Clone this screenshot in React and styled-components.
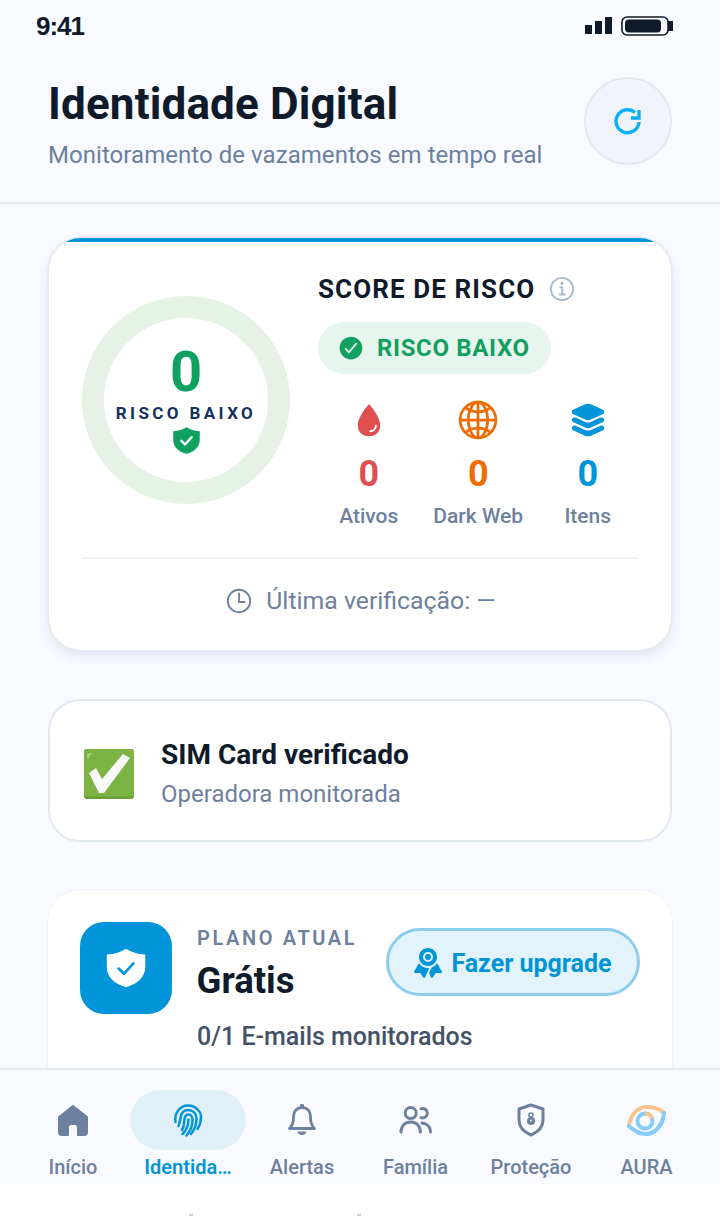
import styled, { createGlobalStyle } from "styled-components";
import {
  IoCheckmarkCircle,
  IoTimeOutline,
  IoInformationCircleOutline,
  IoWater,
  IoGlobeOutline,
  IoLayers,
  IoRibbon,
} from "react-icons/io5";

const Global = createGlobalStyle`
  html, body { margin: 0; padding: 0; background: #fff; }
  * { box-sizing: border-box; }
`;

const Phone = styled.div`
  width: 720px;
  height: 1216px;
  overflow: hidden;
  background: #fff;
  font-family: Roboto, "Liberation Sans", sans-serif;
`;
const Screen = styled.div`
  height: 1184px;
  background: #f8faff;
  display: flex;
  flex-direction: column;
  overflow: hidden;
`;
const StatusBar = styled.div`
  height: 50px;
  flex: none;
  padding: 8px 46px 0 36px;
  display: flex;
  justify-content: space-between;
  align-items: flex-start;
`;
const Time = styled.span`
  font-family: "Liberation Sans", sans-serif;
  font-size: 26px;
  line-height: 36px;
  font-weight: 700;
  letter-spacing: -1px;
  color: #0f1b2b;
`;
const StatusIcons = styled.div`
  display: flex;
  margin-top: 8px;
  gap: 9px;
`;
const Header = styled.header`
  flex: none;
  height: 154px;
  padding: 28px 48px 0 48px;
  border-bottom: 2px solid #e2e8f0;
  display: flex;
  justify-content: space-between;
  align-items: flex-start;
`;
const Title = styled.h1`
  margin: 0;
  font-size: 44px;
  line-height: 52px;
  font-weight: 700;
  letter-spacing: 0.15px;
  color: #0f1b2b;
`;
const Subtitle = styled.p`
  margin: 7px 0 0;
  font-size: 24px;
  line-height: 36px;
  letter-spacing: 0.05px;
  color: #6d809e;
`;
const RefreshButton = styled.button`
  width: 88px;
  height: 88px;
  margin-top: -1px;
  padding: 1px 0 0;
  border-radius: 50%;
  background: #f1f5f9;
  border: 2px solid #e2e8f0;
  display: flex;
  align-items: center;
  justify-content: center;
`;
const Content = styled.main`
  flex: 1;
  min-height: 0;
  padding: 34px 48px 0;
  overflow: hidden;
  display: flex;
  flex-direction: column;
  gap: 48px;
`;
const ScoreCard = styled.section`
  flex: none;
  height: 412px;
  margin: 0 1px 1px;
  background: #fff;
  border-radius: 32px;
  overflow: hidden;
  box-shadow: 0 0 0 1.5px #e2e8f0, 0 5px 12px rgba(45, 70, 110, 0.13);
`;
const ScoreStripe = styled.div`
  height: 4px;
  background: #0095d9;
`;
const ScoreBody = styled.div`
  padding: 28px 33px 0;
`;
const ScoreTop = styled.div`
  display: flex;
  height: 287px;
  gap: 28px;
`;
const Ring = styled.div`
  width: 208px;
  height: 208px;
  margin-top: 26px;
  flex: none;
  border-radius: 50%;
  border: 22px solid #e5f2e5;
  display: flex;
  flex-direction: column;
  align-items: center;
`;
const RingValue = styled.div`
  margin-top: 24px;
  font-size: 56px;
  line-height: 60px;
  font-weight: 700;
  color: #10a160;
`;
const RingLabel = styled.div`
  font-size: 17px;
  line-height: 22px;
  margin-bottom: 2px;
  font-weight: 700;
  letter-spacing: 3.4px;
  color: #14305e;
  white-space: nowrap;
`;
const ScoreInfo = styled.div`
  flex: 1;
`;
const ScoreHead = styled.div`
  display: flex;
  align-items: center;
  gap: 12px;
  height: 36px;
  margin-top: 1px;
  color: #a9bbd1;
`;
const ScoreTitle = styled.div`
  font-size: 26px;
  font-weight: 700;
  letter-spacing: 1.1px;
  color: #0f1b2b;
`;
const RiskPill = styled.div`
  display: inline-flex;
  align-items: center;
  gap: 12px;
  height: 52px;
  margin-top: 15px;
  padding: 0 21px 0 19px;
  border-radius: 26px;
  background: #e7f5ef;
  font-size: 24px;
  font-weight: 700;
  letter-spacing: 0.65px;
  color: #10a160;
`;
const Stats = styled.div`
  display: grid;
  grid-template-columns: repeat(3, 109.5px);
  margin: 26px 0 0 -4px;
`;
const Stat = styled.div`
  display: flex;
  flex-direction: column;
  align-items: center;
  color: ${(p) => p.$color};
`;
const StatIcon = styled.div`
  height: 40px;
  display: flex;
  align-items: center;
`;
const StatValue = styled.div`
  margin-top: 12px;
  font-size: 36px;
  line-height: 44px;
  font-weight: 700;
`;
const StatLabel = styled.div`
  margin-top: 6px;
  font-size: 21px;
  line-height: 28px;
  font-weight: 500;
  color: #6d809e;
  white-space: nowrap;
`;
const ScoreFoot = styled.div`
  border-top: 2px solid #edf2f7;
  height: 85px;
  display: flex;
  align-items: center;
  justify-content: center;
  gap: 12px;
  font-size: 24.8px;
  color: #6d809e;
`;
const SimCard = styled.section`
  flex: none;
  height: 143px;
  background: #fff;
  border: 2px solid #e2e8f0;
  border-radius: 32px;
  padding: 6px 33px 0;
  display: flex;
  align-items: center;
  gap: 26px;
`;
const SimTitle = styled.div`
  font-size: 28px;
  line-height: 36px;
  font-weight: 700;
  color: #0f1b2b;
`;
const SimSub = styled.div`
  margin-top: 4px;
  font-size: 24px;
  line-height: 34px;
  color: #6d809e;
`;
const PlanCard = styled.section`
  flex: none;
  height: 260px;
  background: #fff;
  border-radius: 32px;
  box-shadow: 0 0 0 1px #edf1f6;
  padding: 32px;
`;
const PlanRow = styled.div`
  display: flex;
  gap: 25px;
`;
const PlanIcon = styled.div`
  width: 92px;
  height: 92px;
  flex: none;
  border-radius: 24px;
  background: #0095d9;
  display: flex;
  align-items: center;
  justify-content: center;
`;
const PlanText = styled.div`
  flex: 1;
`;
const PlanLabel = styled.div`
  font-size: 20px;
  line-height: 32px;
  font-weight: 600;
  letter-spacing: 2.6px;
  color: #6d809e;
`;
const PlanName = styled.div`
  margin: 3px 0 0 -0.5px;
  font-size: 36.5px;
  line-height: 48px;
  font-weight: 700;
  color: #0f1b2b;
`;
const UpgradeButton = styled.button`
  height: 68px;
  width: 254px;
  margin-top: 6px;
  padding: 2px 2px 0 0;
  border-radius: 34px;
  border: 3px solid #8ccdee;
  background: #e3f3fb;
  display: flex;
  align-items: center;
  justify-content: center;
  gap: 7px;
  font-family: inherit;
  font-size: 25px;
  font-weight: 700;
  color: #0095d9;
`;
const PlanUsage = styled.div`
  margin: 6px 0 0 117px;
  font-size: 25px;
  line-height: 34px;
  font-weight: 500;
  color: #445268;
`;
const BottomNav = styled.nav`
  flex: none;
  height: 116px;
  background: #f8faff;
  border-top: 2px solid #e2e8f0;
  padding: 20px 16px 0;
  display: grid;
  grid-template-columns: 114px 116px 112px 115px 116px 115px;
`;
const NavItem = styled.div`
  display: flex;
  flex-direction: column;
  align-items: center;
  color: ${(p) => (p.$active ? "#0095d9" : "#6d809e")};
  font-size: 20px;
  font-weight: ${(p) => (p.$active ? 600 : 500)};
`;
const NavIcon = styled.div`
  width: 116px;
  height: 60px;
  border-radius: 30px;
  background: ${(p) => (p.$active ? "#dff0f8" : "transparent")};
  display: flex;
  align-items: center;
  justify-content: center;
`;
const NavLabel = styled.span`
  margin-top: 3px;
  line-height: 28px;
  white-space: nowrap;
`;
const Leftover = styled.div`
  height: 32px;
  padding: 30px 0 0 189px;
  display: flex;
  gap: 164px;
`;
const Speck = styled.i`
  width: 4px;
  height: 2px;
  background: #d0d0d0;
`;

const SignalIcon = () => (
  <svg width="27" height="19" viewBox="0 0 27 19" fill="#0f1b2b">
    <rect x="0" y="9" width="7" height="9" />
    <rect x="10" y="5" width="7" height="13" />
    <rect x="20" y="1" width="7" height="17" />
  </svg>
);

const BatteryIcon = () => (
  <svg width="53" height="21" viewBox="0 0 53 21">
    <rect x="1" y="1" width="46" height="18" rx="5" fill="none" stroke="#0f1b2b" strokeWidth="1.6" />
    <rect x="4" y="3.500" width="36" height="13" rx="4" fill="#0f1b2b" />
    <rect x="47" y="5" width="5" height="10" fill="#0f1b2b" />
  </svg>
);

const RefreshIcon = () => (
  <svg width="30" height="30" viewBox="0 0 30 30" fill="none" stroke="#0ab0f5" strokeWidth="3.400">
    <path d="M26 15A11.500 11.500 0 1 1 22 5.500" />
    <path d="M26 3v8h-8" />
  </svg>
);

const Shield = ({ size, fill, check, sw }) => (
  <svg width={size} height={size} viewBox="0 0 24 24">
    <path
      d="M12 1c3 2 6.500 3 11 3.300v7c0 5.800-4.200 9.800-11 11.700C5.200 21.100 1 17.100 1 11.300v-7C5.500 4 9 3 12 1z"
      fill={fill}
    />
    <path d="M7.800 12.300l3 3 5.400-6" fill="none" stroke={check} strokeWidth={sw} strokeLinecap="round" strokeLinejoin="round" />
  </svg>
);

const SimEmoji = () => (
  <svg width="52" height="50" viewBox="0 0 52 50">
    <rect x="1" y="0" width="50" height="50" rx="3" fill="#689f38" />
    <rect x="1" y="0" width="50" height="47.500" rx="3" fill="#7cb342" />
    <path d="M4 8c0-3 1-4 4-4h2c-3 1-4 3-4.500 6z" fill="#aed581" />
    <path d="M6 24l7-5 6 11L40 5l7 4-26 35h-5z" fill="#fafafa" />
  </svg>
);

const HomeIcon = () => (
  <svg width="32" height="33" viewBox="0 0 32 33" fill="#6d809e" stroke="#6d809e" strokeWidth="2" strokeLinejoin="round">
    <path d="M16 2l14 11v15a3 3 0 0 1-3 3h-6v-8a3 3 0 0 0-3-3h-4a3 3 0 0 0-3 3v8H5a3 3 0 0 1-3-3V13z" />
  </svg>
);

const FingerprintIcon = () => (
  <svg width="30" height="34" viewBox="0 0 30 34" fill="none" stroke="#0095d9" strokeWidth="2.500" strokeLinecap="round">
    <path d="M2.500 19C1 9 8 2.500 15 2.500c8 0 13.500 6.500 13 12.500-.2 4-1.500 8-3.500 11" />
    <path d="M5.500 23c1.500-3 1.500-7 2.500-10 1-4 4-6 7-6 5 0 8.500 3.500 8.500 8 0 6-2 12-5.500 16" />
    <path d="M9 27c2.500-4 2-8 2.500-11 .5-3 2.500-4.500 4-4.500 2.500 0 4 2.500 4 5.500 0 5-2 11-6 15.500" />
    <path d="M15.500 16.500c0 4.500-1 9.500-6 14.500" />
  </svg>
);

const BellIcon = () => (
  <svg width="30" height="34" viewBox="0 0 30 34" fill="none" stroke="#6d809e" strokeWidth="2.800" strokeLinejoin="round">
    <path d="M2.500 25.500h25c-2.500-2.500-4-5.500-4-10.500v-1.500c0-5.500-3.500-9-8.500-9s-8.500 3.500-8.500 9V15c0 5-1.500 8-4 10.500z" />
    <circle cx="15" cy="3" r="2.200" fill="#6d809e" stroke="none" />
    <path d="M10.500 28.500h9c-.5 2.500-2.500 3.500-4.500 3.500s-4-1-4.500-3.500z" fill="#6d809e" stroke="none" />
  </svg>
);

const FamilyIcon = () => (
  <svg width="36" height="30" viewBox="0 0 36 30" fill="none" stroke="#6d809e" strokeWidth="3" strokeLinecap="round">
    <circle cx="12.700" cy="8" r="5.500" />
    <path d="M3 27c0-6 4-10 9.700-10s9.700 4 9.700 10" />
    <path d="M23 3.800a4.700 4.700 0 1 1 0 8.800" />
    <path d="M24 18c5 .5 8.500 4 8.500 9" />
  </svg>
);

const ProtectionIcon = () => (
  <svg width="30" height="34" viewBox="0 0 30 34" fill="none">
    <path d="M15 2l12 4v11c0 7-5 12-12 15C8 29 3 24 3 17V6z" stroke="#6d809e" strokeWidth="3" strokeLinejoin="round" />
    <circle cx="15" cy="12" r="2" stroke="#6d809e" strokeWidth="1.600" />
    <circle cx="15" cy="18" r="4" fill="#6d809e" />
    <circle cx="15" cy="17.500" r="1" fill="#f8faff" />
  </svg>
);

const AuraIcon = () => (
  <svg width="41" height="32" viewBox="0 0 41 32" fill="none" strokeLinecap="round">
    <path d="M3 21C5 10 12 3 21 3c7 0 13 2 17 6" stroke="#f7c48b" strokeWidth="4" />
    <path d="M3 22c5 5 11 8 17 8 10 0 17-10 18-21" stroke="#85cdfb" strokeWidth="4" />
    <circle cx="19" cy="17" r="7.500" stroke="#85cdfb" strokeWidth="4" />
    <path d="M19 9.500a7.500 7.500 0 0 1 7 5" stroke="#f7c48b" strokeWidth="4" strokeLinecap="butt" />
  </svg>
);

const navItems = [
  { label: "Início", icon: <HomeIcon /> },
  { label: "Identida…", icon: <FingerprintIcon />, active: true },
  { label: "Alertas", icon: <BellIcon /> },
  { label: "Família", icon: <FamilyIcon /> },
  { label: "Proteção", icon: <ProtectionIcon /> },
  { label: "AURA", icon: <AuraIcon /> },
];

const App = () => {
  return (
    <Phone>
      <Global />
      <Screen>
        <StatusBar>
          <Time>9:41</Time>
          <StatusIcons>
            <SignalIcon />
            <BatteryIcon />
          </StatusIcons>
        </StatusBar>
        <Header>
          <div>
            <Title>Identidade Digital</Title>
            <Subtitle>Monitoramento de vazamentos em tempo real</Subtitle>
          </div>
          <RefreshButton>
            <RefreshIcon />
          </RefreshButton>
        </Header>
        <Content>
          <ScoreCard>
            <ScoreStripe />
            <ScoreBody>
              <ScoreTop>
                <Ring>
                  <RingValue>0</RingValue>
                  <RingLabel>RISCO BAIXO</RingLabel>
                  <Shield size={29} fill="#10a160" check="#fff" sw={2} />
                </Ring>
                <ScoreInfo>
                  <ScoreHead>
                    <ScoreTitle>SCORE DE RISCO</ScoreTitle>
                    <IoInformationCircleOutline size={31} />
                  </ScoreHead>
                  <RiskPill>
                    <IoCheckmarkCircle size={28} />
                    RISCO BAIXO
                  </RiskPill>
                  <Stats>
                    <Stat $color="#e04f4f">
                      <StatIcon>
                        <IoWater size={40} />
                      </StatIcon>
                      <StatValue>0</StatValue>
                      <StatLabel>Ativos</StatLabel>
                    </Stat>
                    <Stat $color="#ee6c00">
                      <StatIcon>
                        <IoGlobeOutline size={44} />
                      </StatIcon>
                      <StatValue>0</StatValue>
                      <StatLabel>Dark Web</StatLabel>
                    </Stat>
                    <Stat $color="#0095d9">
                      <StatIcon>
                        <IoLayers size={40} />
                      </StatIcon>
                      <StatValue>0</StatValue>
                      <StatLabel>Itens</StatLabel>
                    </Stat>
                  </Stats>
                </ScoreInfo>
              </ScoreTop>
              <ScoreFoot>
                <IoTimeOutline size={30} />
                Última verificação: —
              </ScoreFoot>
            </ScoreBody>
          </ScoreCard>
          <SimCard>
            <SimEmoji />
            <div>
              <SimTitle>SIM Card verificado</SimTitle>
              <SimSub>Operadora monitorada</SimSub>
            </div>
          </SimCard>
          <PlanCard>
            <PlanRow>
              <PlanIcon>
                <Shield size={42} fill="#fff" check="#0095d9" sw={1.5} />
              </PlanIcon>
              <PlanText>
                <PlanLabel>PLANO ATUAL</PlanLabel>
                <PlanName>Grátis</PlanName>
              </PlanText>
              <UpgradeButton>
                <IoRibbon size={32} />
                Fazer upgrade
              </UpgradeButton>
            </PlanRow>
            <PlanUsage>0/1 E-mails monitorados</PlanUsage>
          </PlanCard>
        </Content>
        <BottomNav>
          {navItems.map((item) => (
            <NavItem key={item.label} $active={item.active}>
              <NavIcon $active={item.active}>{item.icon}</NavIcon>
              <NavLabel>{item.label}</NavLabel>
            </NavItem>
          ))}
        </BottomNav>
      </Screen>
      <Leftover>
        <Speck />
        <Speck />
      </Leftover>
    </Phone>
  );
};

export default App;
